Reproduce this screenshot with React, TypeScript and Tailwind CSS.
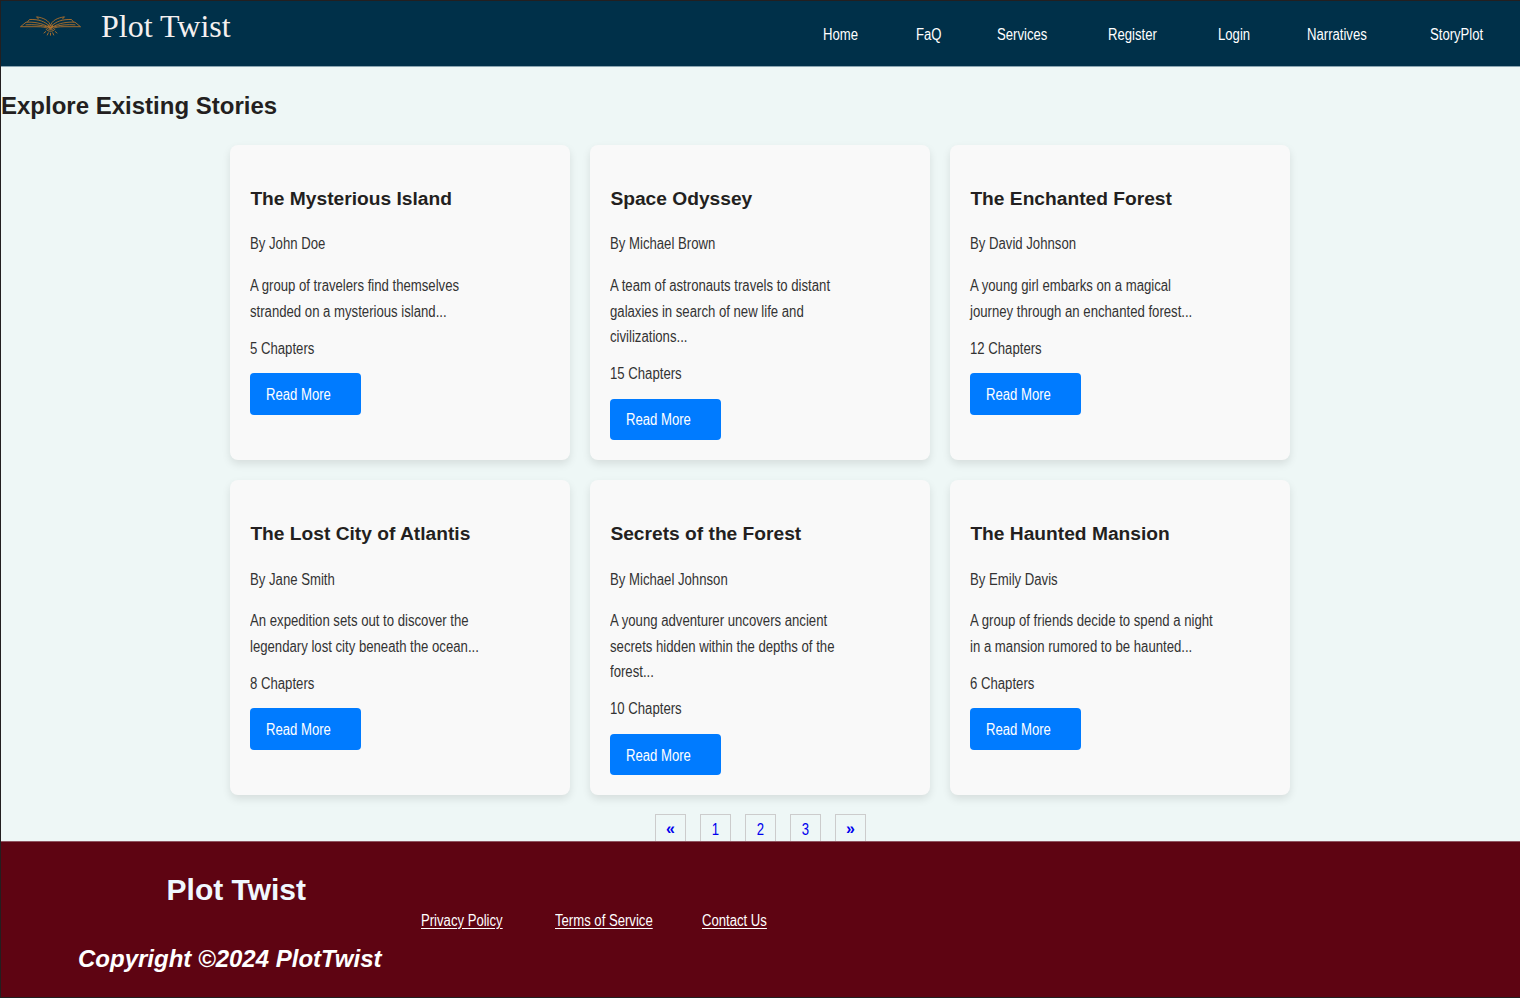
import React from "react";

type Story = { title: string; author: string; text: string; chapters: number };

const stories: Story[] = [
  { title: "The Mysterious Island", author: "John Doe", text: "A group of travelers find themselves stranded on a mysterious island...", chapters: 5 },
  { title: "Space Odyssey", author: "Michael Brown", text: "A team of astronauts travels to distant galaxies in search of new life and civilizations...", chapters: 15 },
  { title: "The Enchanted Forest", author: "David Johnson", text: "A young girl embarks on a magical journey through an enchanted forest...", chapters: 12 },
  { title: "The Lost City of Atlantis", author: "Jane Smith", text: "An expedition sets out to discover the legendary lost city beneath the ocean...", chapters: 8 },
  { title: "Secrets of the Forest", author: "Michael Johnson", text: "A young adventurer uncovers ancient secrets hidden within the depths of the forest...", chapters: 10 },
  { title: "The Haunted Mansion", author: "Emily Davis", text: "A group of friends decide to spend a night in a mansion rumored to be haunted...", chapters: 6 },
];

const navItems = ["Home", "FaQ", "Services", "Register", "Login", "Narratives", "StoryPlot"];
const pages = ["1", "2", "3"];

function BookLogo() {
  return (
    <svg className="ml-[19px] mt-[14px] h-[22px] w-[62px] shrink-0" viewBox="0 0 62 22" fill="none" stroke="#b0702a" strokeWidth="0.9" strokeLinecap="round" strokeLinejoin="round">
      <path d="M30.500 10.500C29 5.500 24 3 16.500 1.800L18.500 4" />
      <path d="M30.500 10.500C32 5.500 37 3 44.500 1.800L42.500 4" />
      <path d="M29.500 11C25 6.500 19 4.200 9.500 4.500L7.500 7" />
      <path d="M31.500 11C36 6.500 42 4.200 51.500 4.500L53.500 7" />
      <path d="M28.500 12C22 8 14 6.800 6 7.200L0.800 11.500" />
      <path d="M32.500 12C39 8 47 6.800 55 7.200L60.200 11.500" />
      <path d="M6 9.800C13 9.300 21 9.800 27.500 12" />
      <path d="M55 9.800C48 9.300 40 9.800 33.500 12" />
      <path d="M0.800 11.700H17C22 11.700 25 12.200 27 13C29 15.200 32 15.200 34 13C36 12.200 39 11.700 44 11.700H60.200" />
      <path d="M28.500 10.200L30.500 12L32.500 10.200L32.500 12.500L30.500 14L28.500 12.500Z" fill="#b0702a" />
      <path d="M26 14.200C28 17 33 17 35 14.200" />
      <path d="M25.800 16.500L24 18M28.300 17.800L27.300 20M30.500 18.200V20.200M32.700 17.800L33.700 20M35.200 16.500L37 18" />
    </svg>
  );
}

function StoryCard({ story }: { story: Story }) {
  return (
    <article className="rounded-lg bg-[#f9f9f9] p-5 shadow-[0_4px_8px_rgba(0,0,0,0.1)]">
      <h3 className="mt-[19px] mb-[17px] text-[19.200px] leading-[30.400px] font-bold text-[#231f20]">{story.title}</h3>
      <p className="mb-4 origin-left scale-x-[0.822]">By {story.author}</p>
      <p className="mb-[11.500px] origin-left scale-x-[0.822]">{story.text}</p>
      <p className="mb-[11.800px] origin-left scale-x-[0.822]">{story.chapters} Chapters</p>
      <a href="#" className="block w-[111px] rounded-[4px] bg-[#007bff] px-4 pt-[8.900px] pb-[7.100px] whitespace-nowrap text-white">
        <span className="block origin-left scale-x-[0.820]">Read More</span>
      </a>
    </article>
  );
}

function ArrowLink({ label }: { label: string }) {
  return (
    <a href="#" className="flex h-10 w-[31px] justify-center border border-[#ccc] pt-px font-bold text-[#0000ee]">{label}</a>
  );
}

function FooterLink({ label, className }: { label: string; className: string }) {
  return (
    <a href="#" className={`block origin-left scale-x-[0.820] self-start underline underline-offset-2 ${className}`}>{label}</a>
  );
}

export default function App() {
  return (
    <div className="flex h-[998px] w-[1520px] flex-col overflow-hidden border-t border-b border-l border-[#231f20] bg-[#eef7f6] font-['Liberation_Sans',sans-serif] text-base leading-[25.600px] text-[#333]">
      <header className="flex h-[66px] shrink-0 border-b border-[#8aa5b2] bg-[#003049]">
        <BookLogo />
        <div className="ml-[19px] mt-[5.500px] font-['Liberation_Serif',serif] text-[32px] leading-[38px] text-[#f5f0f0]">Plot Twist</div>
        <nav className="ml-auto flex gap-[50px] pt-[21px] pr-[25px] text-white">
          {navItems.map((item) => (
            <a key={item} href="#" className="block origin-left scale-x-[0.820]">{item}</a>
          ))}
        </nav>
      </header>

      <main className="flex h-[774px] shrink-0 flex-col overflow-hidden">
        <h2 className="mt-[20px] text-2xl leading-[38.400px] font-bold text-[#231f20]">Explore Existing Stories</h2>
        <div className="mt-[19.500px] ml-[229.400px] grid w-[1060px] grid-cols-3 gap-5">
          {stories.map((story) => (
            <StoryCard key={story.title} story={story} />
          ))}
        </div>
        <div className="mt-[18.400px] ml-[654px] flex gap-[14px]">
          <ArrowLink label="«" />
          {pages.map((page) => (
            <a key={page} href="#" className="flex h-10 w-[31px] justify-center border border-[#ccc] pt-[2px] text-[#0000ee]">
              <span className="block scale-x-[0.820]">{page}</span>
            </a>
          ))}
          <ArrowLink label="»" />
        </div>
      </main>

      <footer className="flex flex-1 border-t border-[#8f5560] bg-[#5e0412] text-white">
        <div className="flex w-[381px] flex-col pl-[77px]">
          <h1 className="mt-[24px] ml-[88.600px] text-[30px] leading-[48px] font-bold text-[#f0f8ff]">Plot Twist</h1>
          <p className="mt-[26px] text-2xl leading-[38.400px] font-bold whitespace-nowrap italic">Copyright ©2024 PlotTwist</p>
        </div>
        <div className="ml-[39px] flex pt-[66px]">
          <FooterLink label="Privacy Policy" className="" />
          <FooterLink label="Terms of Service" className="ml-[34.800px]" />
          <FooterLink label="Contact Us" className="ml-[27px]" />
        </div>
      </footer>
    </div>
  );
}
